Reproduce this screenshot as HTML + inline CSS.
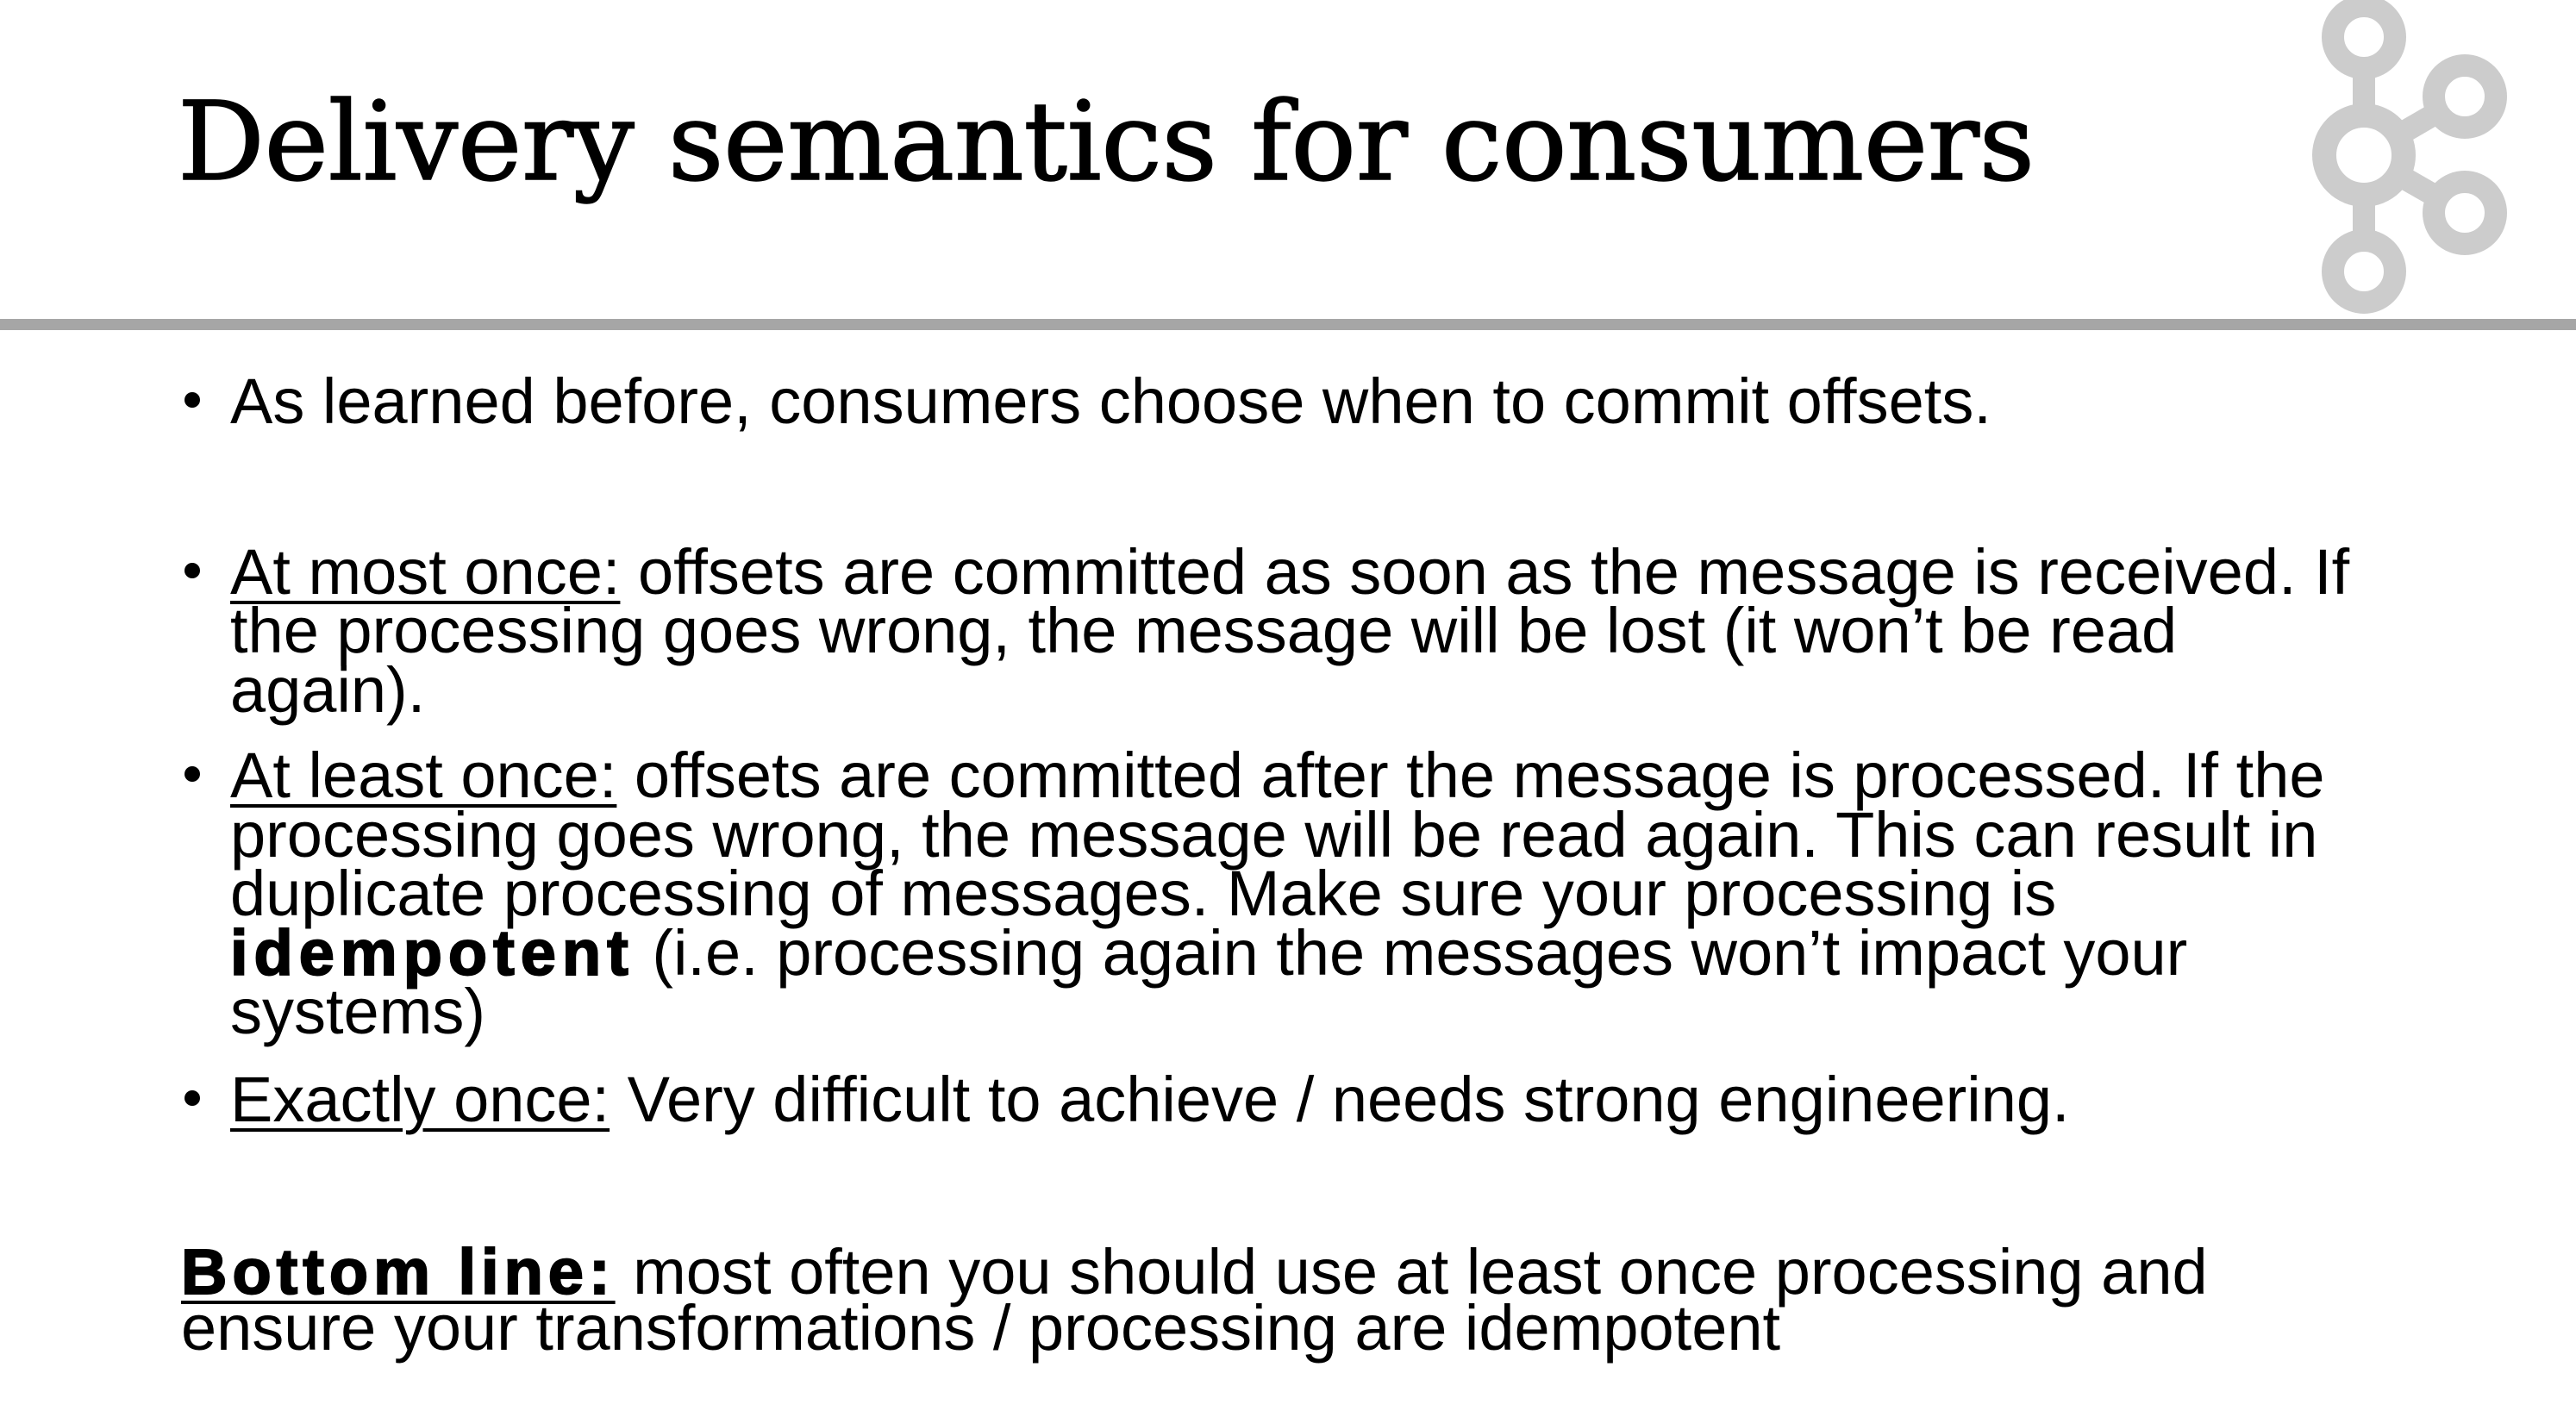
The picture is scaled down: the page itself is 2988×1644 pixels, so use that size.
<!DOCTYPE html>
<html><head><meta charset="utf-8"><style>
html,body{margin:0;padding:0;background:#fff;}
body{width:2988px;height:1644px;position:relative;overflow:hidden;}
.t{position:absolute;left:206px;top:102px;font-family:"DejaVu Serif","Liberation Serif",serif;font-size:126px;line-height:1;color:#000;white-space:nowrap;letter-spacing:-0.5px;-webkit-text-stroke:1.5px #000;}
.l{position:absolute;font-family:"Liberation Sans",sans-serif;font-size:74px;line-height:1;color:#000;white-space:nowrap;}
.b{position:absolute;left:214px;width:18px;height:18px;border-radius:50%;background:#000;}
u{text-decoration-thickness:4px;text-underline-offset:8px;}
b{-webkit-text-stroke:2px #000;}
</style></head><body>
<div class="t">Delivery semantics for consumers</div>
<svg style="position:absolute;left:0;top:0" width="2988" height="400">
<g fill="none" stroke="#cccccc" stroke-width="26">
<line x1="2742" y1="43" x2="2742" y2="315"/>
<line x1="2742" y1="180" x2="2859" y2="112"/>
<line x1="2742" y1="180" x2="2859" y2="247"/>
</g>
<g fill="#fff" stroke="#cccccc" stroke-width="26">
<circle cx="2742" cy="43" r="36"/>
<circle cx="2859" cy="112" r="36"/>
<circle cx="2859" cy="247" r="36"/>
<circle cx="2742" cy="315" r="36"/>
<circle cx="2742" cy="180" r="46" stroke-width="28"/>
</g>
<rect x="0" y="370" width="2988" height="13" fill="#a6a6a6"/>
</svg>

<div class="b" style="top:455px"></div>
<div class="l" style="left:267px;top:429px">As learned before, consumers choose when to commit offsets.</div>

<div class="b" style="top:653px"></div>
<div class="l" style="left:267px;top:627px"><u>At most once:</u> offsets are committed as soon as the message is received. If</div>
<div class="l" style="left:267px;top:695px">the processing goes wrong, the message will be lost (it won’t be read</div>
<div class="l" style="left:267px;top:764px">again).</div>

<div class="b" style="top:889px"></div>
<div class="l" style="left:267px;top:863px"><u>At least once:</u> offsets are committed after the message is processed. If the</div>
<div class="l" style="left:267px;top:932px">processing goes wrong, the message will be read again. This can result in</div>
<div class="l" style="left:267px;top:1000px">duplicate processing of messages. Make sure your processing is</div>
<div class="l" style="left:267px;top:1069px"><b style="letter-spacing:7px">idempotent</b> (i.e. processing again the messages won’t impact your</div>
<div class="l" style="left:267px;top:1137px">systems)</div>

<div class="b" style="top:1265px"></div>
<div class="l" style="left:267px;top:1239px"><u>Exactly once:</u> Very difficult to achieve / needs strong engineering.</div>

<div class="l" style="left:210px;top:1439px"><b style="letter-spacing:6px"><u>Bottom line:</u></b> most often you should use at least once processing and</div>
<div class="l" style="left:210px;top:1504px">ensure your transformations / processing are idempotent</div>
</body></html>
